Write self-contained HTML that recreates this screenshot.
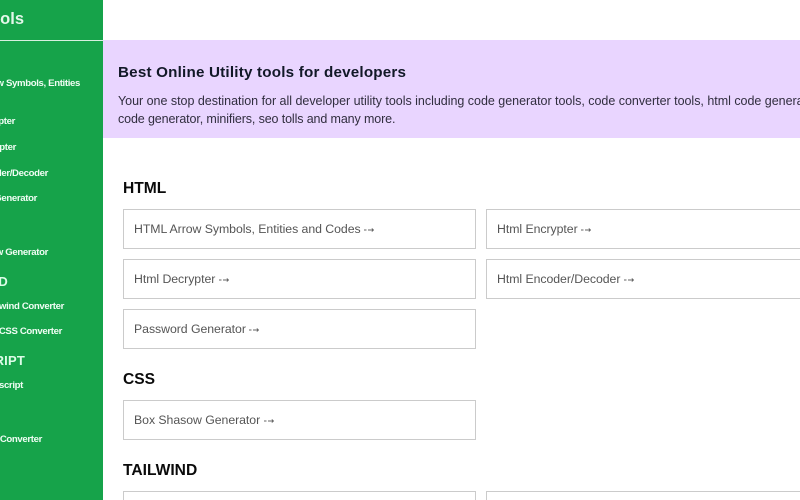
<!DOCTYPE html>
<html>
<head>
<meta charset="utf-8">
<style>
html,body{margin:0;padding:0;width:800px;height:500px;overflow:hidden;background:#fff;font-family:"Liberation Sans",sans-serif}
#root{position:relative;width:800px;height:500px;overflow:hidden}
#side{position:absolute;left:0;top:0;width:103px;height:500px;background:#16a34a;overflow:hidden}
#rule{position:absolute;left:0;top:40px;width:103px;height:1px;background:#d7f0df}
.s{position:absolute;white-space:nowrap;color:#f0fdf4;font-weight:700;font-size:9.6px;line-height:12px;letter-spacing:-.35px}
.sh{position:absolute;white-space:nowrap;color:#dcfce7;font-weight:700;font-size:13px;line-height:16px;letter-spacing:.2px}
#hero{position:absolute;left:103px;top:40px;width:697px;height:98px;background:#e9d5ff}
#hero h1{position:absolute;left:15px;margin:0;font-size:15.2px;line-height:20px;font-weight:700;color:#111827;white-space:nowrap;letter-spacing:.2px}
#hero p{position:absolute;left:15px;margin:0;font-size:12.5px;line-height:18px;color:#312e3f;white-space:nowrap;letter-spacing:-.12px}
h2{position:absolute;left:123px;margin:0;font-size:15.6px;line-height:20px;font-weight:700;color:#0a0a0a;white-space:nowrap}
.b{position:absolute;box-sizing:border-box;height:40px;border:1px solid #cbcbcb;background:#fff;color:#555;font-size:12.3px;line-height:39px;padding-left:10px;white-space:nowrap;letter-spacing:-.05px}
.b svg{display:inline-block;width:10px;height:6px;margin-left:3.5px;vertical-align:0}
.l{left:123px;width:353px}
.r{left:486px;width:330px}
</style>
</head>
<body>
<div id="root">
<div id="side">
<div class="sh" style="right:79px;top:10px;font-size:16.5px;line-height:18px;letter-spacing:0;color:#e4f7ea">Tools</div>
<div id="rule"></div>
<div class="s" style="right:23px;top:78px">HTML Arrow Symbols, Entities</div>
<div class="s" style="right:88px;top:116px">Html Encrypter</div>
<div class="s" style="right:87px;top:142px">Html Decrypter</div>
<div class="s" style="right:55px;top:168px">Html Encoder/Decoder</div>
<div class="s" style="right:66px;top:193px">Password Generator</div>
<div class="s" style="right:55px;top:247px">Box Shasow Generator</div>
<div class="sh" style="right:95px;top:274px">TAILWIND</div>
<div class="s" style="right:39px;top:301px">Css to Tailwind Converter</div>
<div class="s" style="right:41px;top:326px">Tailwind to CSS Converter</div>
<div class="sh" style="right:78px;top:353px">JAVASCRIPT</div>
<div class="s" style="right:80px;top:380px">Minify Javascript</div>
<div class="s" style="right:61px;top:434px">Json Converter</div>
</div>
<div id="hero">
<h1 style="top:21px;margin-top:2px">Best Online Utility tools for developers</h1>
<p style="top:52px;letter-spacing:-.02px">Your one stop destination for all developer utility tools including code generator tools, code converter tools, html code generator, css</p>
<p style="top:70px">code generator, minifiers, seo tolls and many more.</p>
</div>
<h2 style="top:179px">HTML</h2>
<div class="b l" style="top:209px">HTML Arrow Symbols, Entities and Codes<svg viewBox="0 0 10 6"><path d="M0 3H2.5M4 3H9.5M7.8 1.5L9.5 3L7.8 4.5" fill="none" stroke="#666" stroke-width=".9"/></svg></div>
<div class="b r" style="top:209px">Html Encrypter<svg viewBox="0 0 10 6"><path d="M0 3H2.5M4 3H9.5M7.8 1.5L9.5 3L7.8 4.5" fill="none" stroke="#666" stroke-width=".9"/></svg></div>
<div class="b l" style="top:259px">Html Decrypter<svg viewBox="0 0 10 6"><path d="M0 3H2.5M4 3H9.5M7.8 1.5L9.5 3L7.8 4.5" fill="none" stroke="#666" stroke-width=".9"/></svg></div>
<div class="b r" style="top:259px">Html Encoder/Decoder<svg viewBox="0 0 10 6"><path d="M0 3H2.5M4 3H9.5M7.8 1.5L9.5 3L7.8 4.5" fill="none" stroke="#666" stroke-width=".9"/></svg></div>
<div class="b l" style="top:309px">Password Generator<svg viewBox="0 0 10 6"><path d="M0 3H2.5M4 3H9.5M7.8 1.5L9.5 3L7.8 4.5" fill="none" stroke="#666" stroke-width=".9"/></svg></div>
<h2 style="top:370px">CSS</h2>
<div class="b l" style="top:400px">Box Shasow Generator<svg viewBox="0 0 10 6"><path d="M0 3H2.5M4 3H9.5M7.8 1.5L9.5 3L7.8 4.5" fill="none" stroke="#666" stroke-width=".9"/></svg></div>
<h2 style="top:461px">TAILWIND</h2>
<div class="b l" style="top:491px"></div>
<div class="b r" style="top:491px"></div>
</div>
</body>
</html>
